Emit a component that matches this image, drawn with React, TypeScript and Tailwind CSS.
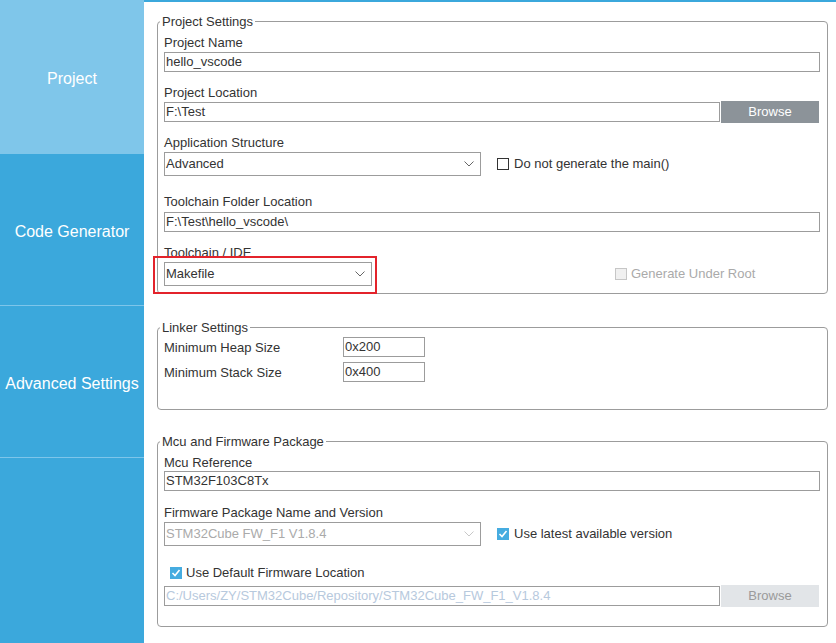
import React from "react";

const font = "font-['Liberation_Sans',Arial,sans-serif]";

const Chevron = ({ disabled }: { disabled?: boolean }) => (
  <svg width="10" height="6" viewBox="0 0 10 6" className="shrink-0">
    <polyline
      points="0.5,0.5 5,5 9.5,0.5"
      fill="none"
      stroke={disabled ? "#c8c8c8" : "#666"}
      strokeWidth="1"
    />
  </svg>
);

const Label = ({ children, className = "" }: { children: React.ReactNode; className?: string }) => (
  <div className={`h-[15px] leading-[15px] text-[13px] text-[#333] ${className}`}>{children}</div>
);

const TextBox = ({ value, className = "", disabled }: { value: string; className?: string; disabled?: boolean }) => (
  <div
    className={`h-[20px] border border-[#9c9c9c] bg-white pl-[1px] leading-[18px] text-[13px] whitespace-nowrap overflow-hidden ${
      disabled ? "text-[#b7c9dd]" : "text-[#333]"
    } ${className}`}
  >
    {value}
  </div>
);

const Select = ({ value, className = "", disabled }: { value: string; className?: string; disabled?: boolean }) => (
  <div
    className={`h-[24px] border border-[#9c9c9c] bg-white flex items-center justify-between pl-[1px] pr-[6px] text-[13px] ${
      disabled ? "text-[#aaaaaa]" : "text-[#333]"
    } ${className}`}
  >
    <span>{value}</span>
    <Chevron disabled={disabled} />
  </div>
);

const Check = ({ checked, disabled }: { checked?: boolean; disabled?: boolean }) => {
  if (checked) {
    return (
      <span className="w-[12px] h-[12px] bg-[#46ace0] flex items-center justify-center shrink-0">
        <svg width="10" height="10" viewBox="0 0 10 10">
          <polyline points="1.5,5 4,7.5 8.5,2" fill="none" stroke="#fff" strokeWidth="1.6" />
        </svg>
      </span>
    );
  }
  return (
    <span
      className={`w-[12px] h-[12px] border shrink-0 ${
        disabled ? "border-[#c6c6c6] bg-[#f0f0f0]" : "border-[#333] bg-white"
      }`}
    />
  );
};

const BrowseButton = ({ disabled }: { disabled?: boolean }) => (
  <div
    className={`w-[98px] h-[22px] ml-[1px] mr-[1px] flex items-center justify-center text-[13px] ${
      disabled ? "bg-[#e2e5e8] text-[#9a9a9a]" : "bg-[#8c9399] text-white"
    }`}
  >
    Browse
  </div>
);

const Group = ({
  title,
  children,
  className = "",
}: {
  title: string;
  children: React.ReactNode;
  className?: string;
}) => (
  <fieldset className={`border border-[#9c9c9c] rounded-[4px] ml-[13px] mr-[8px] ${className}`}>
    <legend className="ml-[2px] px-[2px] h-[15px] leading-[15px] text-[13px] text-[#333]">{title}</legend>
    <div className="pl-[6px] pr-[7px]">{children}</div>
  </fieldset>
);

const tabs = [
  { name: "Project", h: "h-[154px]", bg: "bg-[#7fc6ea]" },
  { name: "Code Generator", h: "h-[151px]", bg: "bg-[#3ba8dc]" },
  { name: "Advanced Settings", h: "h-[152px]", bg: "bg-[#3ba8dc] border-t border-[#7ec5ea]" },
];

export default function App() {
  return (
    <div className={`h-screen flex overflow-hidden bg-white ${font}`}>
      {/* Sidebar */}
      <div className="w-[144px] shrink-0 flex flex-col bg-[#3ba8dc]">
        {tabs.map((t) => (
          <div
            key={t.name}
            className={`${t.h} ${t.bg} pt-[4px] flex items-center justify-center text-white text-[16px]`}
          >
            {t.name}
          </div>
        ))}
        <div className="flex-1 border-t border-[#7ec5ea]" />
      </div>

      {/* Content */}
      <div className="flex-1 border-t-2 border-[#3ba8dc] pt-[12px]">
        <Group title="Project Settings" className="pb-[7px]">
          <Label className="mt-[6px]">Project Name</Label>
          <TextBox value="hello_vscode" className="mt-[2px]" />

          <Label className="mt-[13px]">Project Location</Label>
          <div className="mt-[1px] flex items-center">
            <TextBox value="F:\Test" className="flex-1" />
            <BrowseButton />
          </div>

          <Label className="mt-[12px]">Application Structure</Label>
          <div className="mt-[2px] flex items-center">
            <Select value="Advanced" className="w-[317px]" />
            <div className="ml-[16px] flex items-center gap-[5px] text-[13px] text-[#333]">
              <Check />
              <span>Do not generate the main()</span>
            </div>
          </div>

          <Label className="mt-[18px]">Toolchain Folder Location</Label>
          <TextBox value="F:\Test\hello_vscode\" className="mt-[3px]" />

          <Label className="mt-[13px]">Toolchain / IDE</Label>
          <div className="mt-[2px] flex items-center">
            <div className="relative w-[208px]">
              <Select value="Makefile" />
              <div className="absolute -left-[11px] -right-[5px] -top-[6px] -bottom-[8px] border-2 border-[#e3232b] pointer-events-none" />
            </div>
            <div className="ml-[243px] flex items-center gap-[4px] text-[13px] text-[#aaaaaa]">
              <Check disabled />
              <span>Generate Under Root</span>
            </div>
          </div>
        </Group>

        <Group title="Linker Settings" className="mt-[26px] pb-[27px]">
          <div className="mt-[2px] flex items-center">
            <Label className="w-[179px]">Minimum Heap Size</Label>
            <TextBox value="0x200" className="w-[82px]" />
          </div>
          <div className="mt-[5px] flex items-center">
            <Label className="w-[179px]">Minimum Stack Size</Label>
            <TextBox value="0x400" className="w-[82px]" />
          </div>
        </Group>

        <Group title="Mcu and Firmware Package" className="mt-[24px] pb-[19px]">
          <Label className="mt-[6px]">Mcu Reference</Label>
          <TextBox value="STM32F103C8Tx" className="mt-[1px]" />

          <Label className="mt-[14px]">Firmware Package Name and Version</Label>
          <div className="mt-[2px] flex items-center">
            <Select value="STM32Cube FW_F1 V1.8.4" className="w-[317px]" disabled />
            <div className="ml-[16px] flex items-center gap-[5px] text-[13px] text-[#333]">
              <Check checked />
              <span>Use latest available version</span>
            </div>
          </div>

          <div className="mt-[19px] ml-[6px] h-[15px] flex items-center gap-[4px] text-[13px] text-[#333]">
            <Check checked />
            <span>Use Default Firmware Location</span>
          </div>
          <div className="mt-[5px] flex items-center">
            <TextBox value="C:/Users/ZY/STM32Cube/Repository/STM32Cube_FW_F1_V1.8.4" className="flex-1" disabled />
            <BrowseButton disabled />
          </div>
        </Group>
      </div>
    </div>
  );
}
